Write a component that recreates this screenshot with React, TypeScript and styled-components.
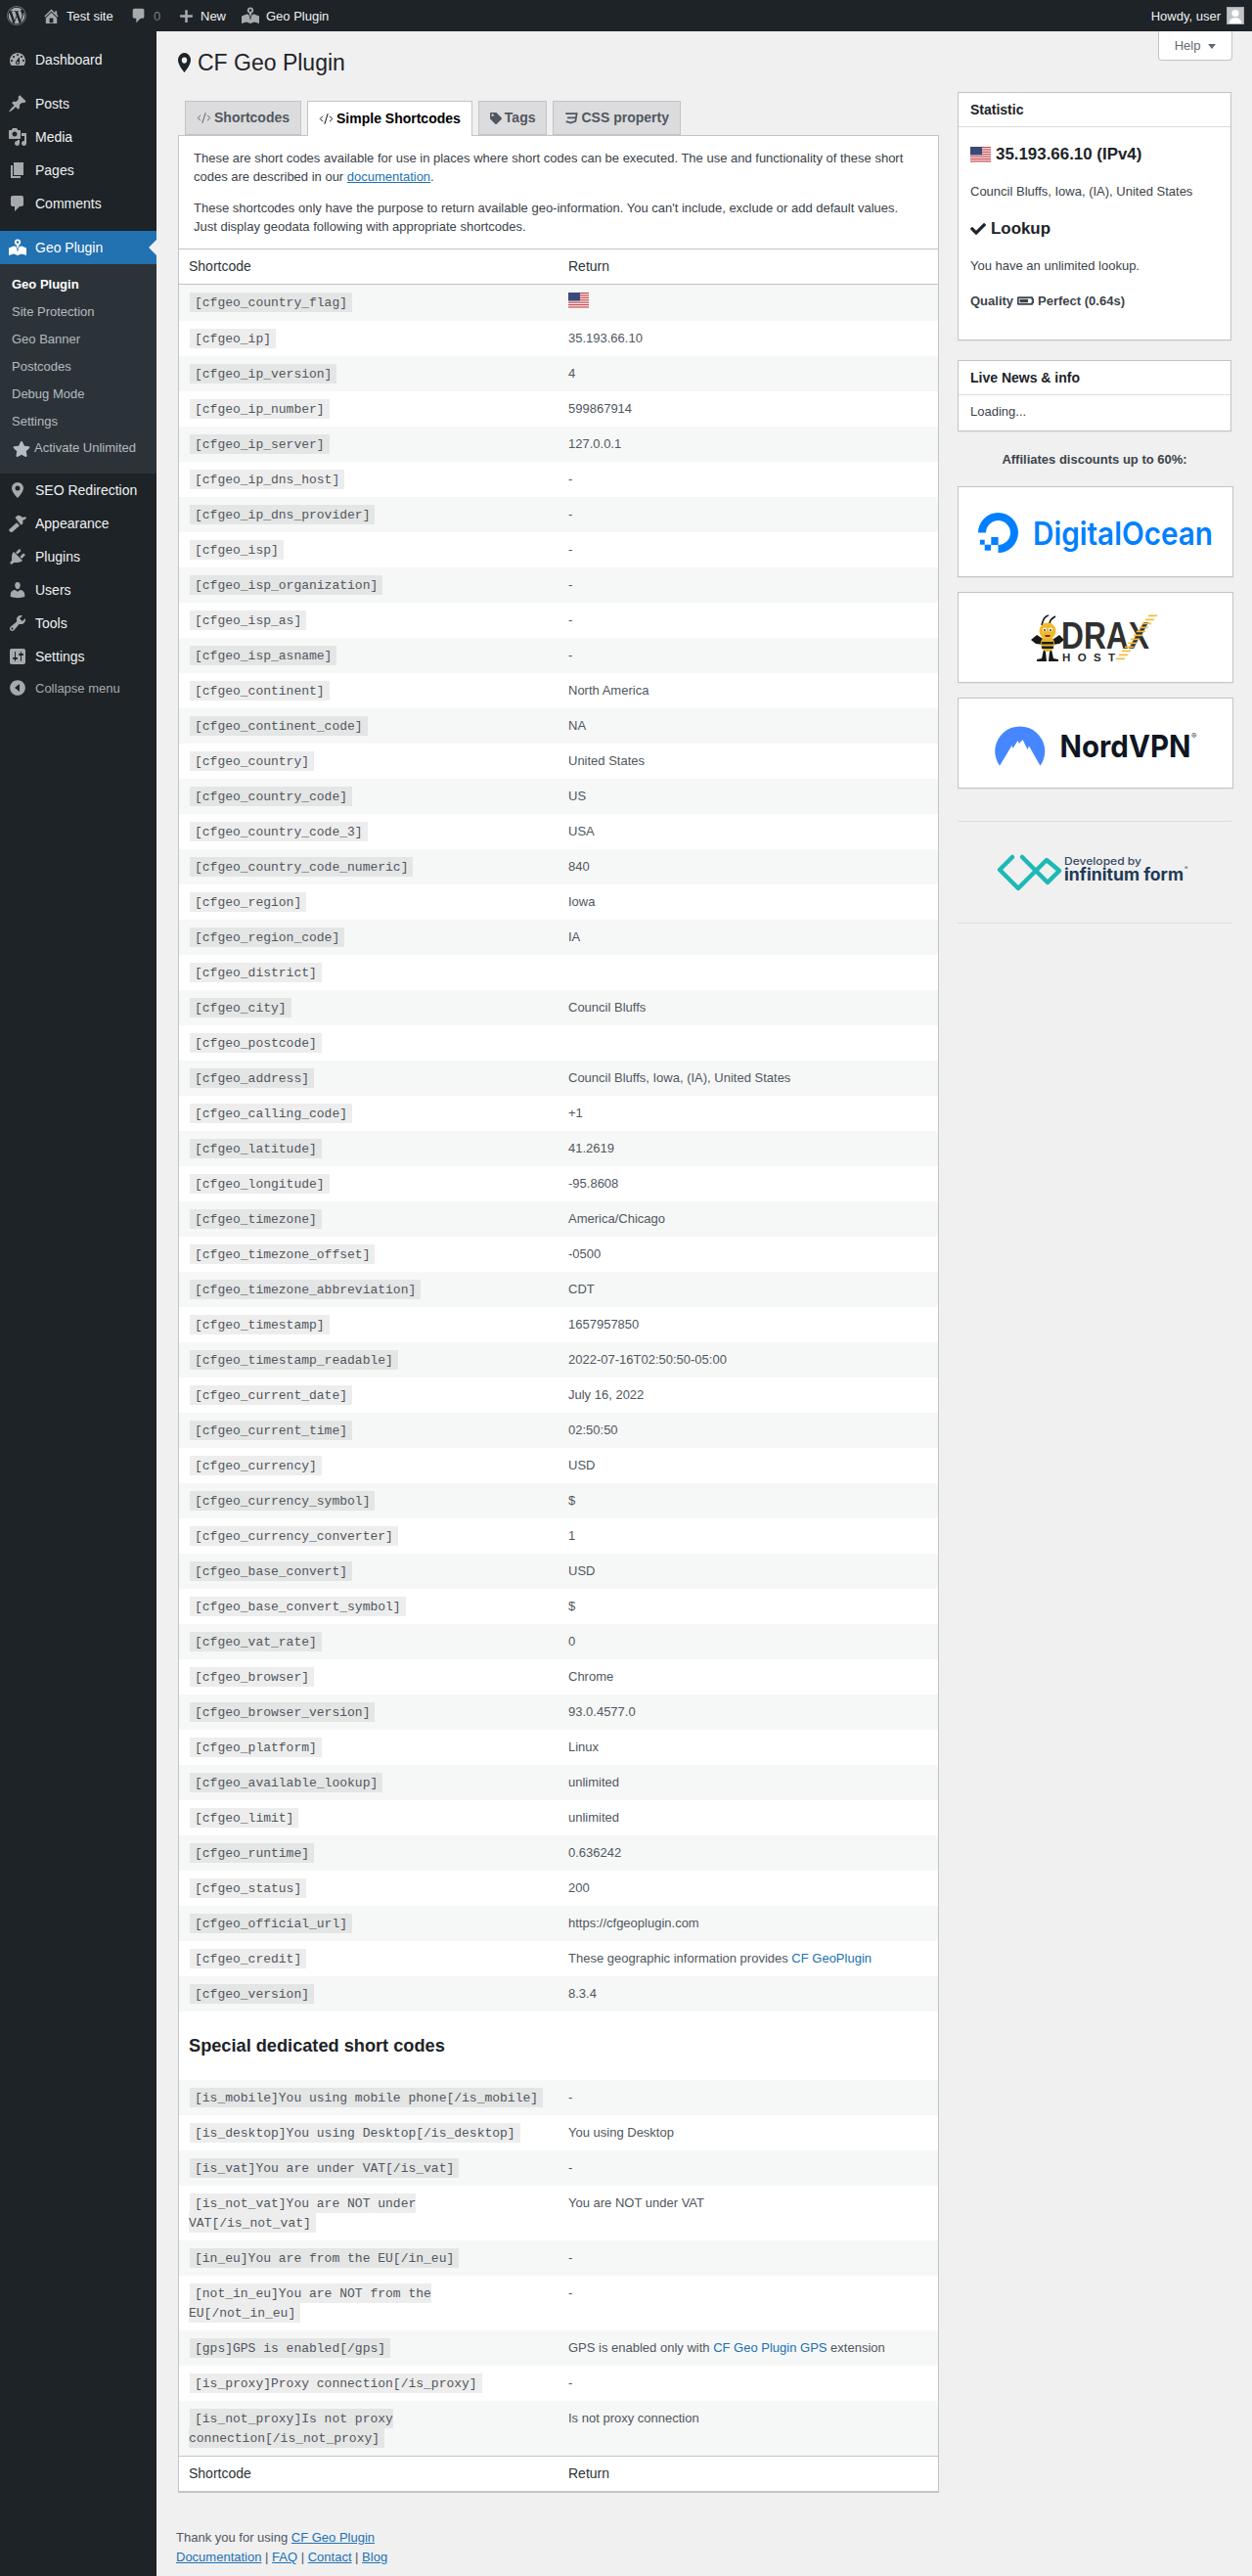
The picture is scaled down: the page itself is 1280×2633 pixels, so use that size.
import React from "react";
import styled, { createGlobalStyle } from "styled-components";
import { FaWordpress, FaTag, FaCheck, FaBatteryThreeQuarters, FaStar } from "react-icons/fa";
import { CodeXml } from "lucide-react";

const GlobalStyle = createGlobalStyle`
  html, body {
    margin: 0;
    padding: 0;
    background: #f0f0f1;
  }
  body {
    font-family: "Liberation Sans", Arial, sans-serif;
    font-size: 13px;
    line-height: 19px;
    color: #3c434a;
  }
  * {
    box-sizing: border-box;
  }
`;

const DASHICONS: Record<string, string> = {
  dashboard:
    "M3.76 16h12.48c1.1-1.37 1.76-3.11 1.76-5 0-4.42-3.58-8-8-8s-8 3.58-8 8c0 1.89.66 3.63 1.76 5zM10 4c.55 0 1 .45 1 1s-.45 1-1 1-1-.45-1-1 .45-1 1-1zM6 6c.55 0 1 .45 1 1s-.45 1-1 1-1-.45-1-1 .45-1 1-1zm8 0c.55 0 1 .45 1 1s-.45 1-1 1-1-.45-1-1 .45-1 1-1zm-5.37 5.55L12 7v6c0 1.1-.9 2-2 2s-2-.9-2-2c0-.57.24-1.08.63-1.45zM4 10c.55 0 1 .45 1 1s-.45 1-1 1-1-.45-1-1 .45-1 1-1zm12 0c.55 0 1 .45 1 1s-.45 1-1 1-1-.45-1-1 .45-1 1-1zm-5 3c0-.55-.45-1-1-1s-1 .45-1 1 .45 1 1 1 1-.45 1-1z",
  post:
    "M10.44 3.02l1.82-1.82 6.36 6.35-1.83 1.82c-1.05-.68-2.48-.57-3.41.36l-.75.75c-.92.93-1.04 2.35-.35 3.41l-1.83 1.82-2.41-2.41-2.8 2.79c-.42.42-3.38 2.71-3.8 2.29s1.86-3.39 2.28-3.81l2.79-2.79L4.1 9.36l1.83-1.82c1.05.69 2.48.57 3.4-.36l.75-.75c.93-.92 1.05-2.35.36-3.41z",
  media:
    "M13 11V4c0-.55-.45-1-1-1h-1.67L9 1H5L3.67 3H2c-.55 0-1 .45-1 1v7c0 .55.45 1 1 1h10c.55 0 1-.45 1-1zM7 4.5c1.38 0 2.5 1.12 2.5 2.5S8.38 9.5 7 9.5 4.5 8.38 4.5 7 5.62 4.5 7 4.5zM14 6h5v10.5c0 1.38-1.12 2.5-2.5 2.5S14 17.88 14 16.5s1.12-2.5 2.5-2.5c.17 0 .34.02.5.05V9h-3V6zm-4 8.05V13h2v3.5c0 1.38-1.12 2.5-2.5 2.5S7 17.88 7 16.5 8.12 14 9.5 14c.17 0 .34.02.5.05z",
  page: "M6 15V2h10v13H6zm-1 1h8v2H3V5h2v11z",
  comments:
    "M5 2h9c1.1 0 2 .9 2 2v7c0 1.1-.9 2-2 2h-2l-5 5v-5H5c-1.1 0-2-.9-2-2V4c0-1.1.9-2 2-2z",
  location:
    "M10 2a6 6 0 0 0-6 6c0 4 6 10 6 10s6-6 6-10a6 6 0 0 0-6-6zm0 8.5A2.5 2.5 0 1 1 10 5.5a2.5 2.5 0 0 1 0 5z",
  appearance:
    "M1.5 16 9 9.2l3 3L5 18.6c-1.6 1.2-4.6-.8-3.5-2.6zM7.5 4l2-1.8c1.5-1 3.5.3 5 1.3 1.5.6 3.5-.5 4.5.5 0 1.5-2.5 2-3.5 3-.5 1 0 2 0 3l-2 1.8z",
  plugins:
    "M13.11 4.36L9.87 7.6 8 5.73l3.24-3.24c.35-.34 1.05-.2 1.56.32.52.51.66 1.21.31 1.55zm-8 1.77l.91-1.12 9.01 9.01-1.19.84c-.71.71-2.63 1.16-3.82 1.16H6.14L4.9 17.26c-.59.59-1.54.59-2.12 0-.59-.58-.59-1.53 0-2.12l1.24-1.24v-3.88c0-1.13.4-3.19 1.09-3.89zm7.26 3.97l3.24-3.24c.34-.35 1.04-.21 1.55.31.52.51.66 1.21.31 1.55l-3.24 3.25z",
  users:
    "M10 9.25c-2.27 0-2.73-3.44-2.73-3.44C7 4.02 7.82 2 9.97 2c2.16 0 2.98 2.02 2.71 3.81 0 0-.41 3.44-2.68 3.44zm0 2.57L12.72 10c2.39 0 4.52 2.33 4.52 4.53v2.49s-3.65 1.13-7.24 1.13c-3.65 0-7.24-1.13-7.24-1.13v-2.49c0-2.25 1.94-4.48 4.47-4.48z",
  tools:
    "M16.68 9.77c-1.34 1.34-3.3 1.67-4.95.99l-5.41 6.52c-.99.99-2.59.99-3.58 0s-.99-2.59 0-3.57l6.52-5.42c-.68-1.65-.35-3.61.99-4.95 1.28-1.28 3.12-1.62 4.72-1.06l-2.89 2.89 2.82 2.82 2.86-2.87c.53 1.58.18 3.39-1.08 4.65zM3.81 16.21c.4.39 1.04.39 1.43 0 .4-.4.4-1.04 0-1.43-.39-.4-1.03-.4-1.43 0-.39.39-.39 1.03 0 1.43z",
  settings:
    "M18 16V4c0-1.1-.9-2-2-2H4c-1.1 0-2 .9-2 2v12c0 1.1.9 2 2 2h12c1.1 0 2-.9 2-2zM8 11h1c.55 0 1 .45 1 1s-.45 1-1 1H8v1.5c0 .28-.22.5-.5.5s-.5-.22-.5-.5V13H6c-.55 0-1-.45-1-1s.45-1 1-1h1V5.5c0-.28.22-.5.5-.5s.5.22.5.5V11zm5-2h-1c-.55 0-1-.45-1-1s.45-1 1-1h1V5.5c0-.28.22-.5.5-.5s.5.22.5.5V7h1c.55 0 1 .45 1 1s-.45 1-1 1h-1v5.5c0 .28-.22.5-.5.5s-.5-.22-.5-.5V9z",
  collapse:
    "M10 2.16c4.33 0 7.84 3.51 7.84 7.84s-3.51 7.84-7.84 7.84S2.16 14.33 2.16 10 5.67 2.16 10 2.16zM12 14V6l-5 4z",
  home:
    "M16 8.5l1.53 1.53-1.06 1.06L10 4.62l-6.47 6.47-1.06-1.06L10 2.5l4 4v-2h2v4zm-6-2.46l6 5.99V18H4v-5.97zM12 17v-5H8v5h4z",
  plus: "M17.5 8.5v3h-6v6h-3v-6h-6v-3h6v-6h3v6z",
  geo:
    "M1 10.5 6 8.5l2.2.2L10 14.5l1.8-5.8 2.2-.2 5 2V18l-5-1.6L10 18l-4-1.6L1 18zM10 1.5a3.1 3.1 0 0 1 1.2 6L10 12.5 8.8 7.5a3.1 3.1 0 0 1 1.2-6zm0 1.8a1.3 1.3 0 1 0 0 2.6 1.3 1.3 0 0 0 0-2.6z",
};

type MenuEntry = { label: string; icon: string; gapBefore?: boolean; current?: boolean };

const MENU_TOP: MenuEntry[] = [
  { label: "Dashboard", icon: "dashboard" },
  { label: "Posts", icon: "post", gapBefore: true },
  { label: "Media", icon: "media" },
  { label: "Pages", icon: "page" },
  { label: "Comments", icon: "comments" },
  { label: "Geo Plugin", icon: "geo", gapBefore: true, current: true },
];

const MENU_SUB = ["Site Protection", "Geo Banner", "Postcodes", "Debug Mode", "Settings"];

const MENU_BOTTOM: MenuEntry[] = [
  { label: "SEO Redirection", icon: "location" },
  { label: "Appearance", icon: "appearance" },
  { label: "Plugins", icon: "plugins" },
  { label: "Users", icon: "users" },
  { label: "Tools", icon: "tools" },
  { label: "Settings", icon: "settings" },
];

const GEO_ROWS: [string, React.ReactNode][] = [
  ["[cfgeo_ip]", "35.193.66.10"],
  ["[cfgeo_ip_version]", "4"],
  ["[cfgeo_ip_number]", "599867914"],
  ["[cfgeo_ip_server]", "127.0.0.1"],
  ["[cfgeo_ip_dns_host]", "-"],
  ["[cfgeo_ip_dns_provider]", "-"],
  ["[cfgeo_isp]", "-"],
  ["[cfgeo_isp_organization]", "-"],
  ["[cfgeo_isp_as]", "-"],
  ["[cfgeo_isp_asname]", "-"],
  ["[cfgeo_continent]", "North America"],
  ["[cfgeo_continent_code]", "NA"],
  ["[cfgeo_country]", "United States"],
  ["[cfgeo_country_code]", "US"],
  ["[cfgeo_country_code_3]", "USA"],
  ["[cfgeo_country_code_numeric]", "840"],
  ["[cfgeo_region]", "Iowa"],
  ["[cfgeo_region_code]", "IA"],
  ["[cfgeo_district]", ""],
  ["[cfgeo_city]", "Council Bluffs"],
  ["[cfgeo_postcode]", ""],
  ["[cfgeo_address]", "Council Bluffs, Iowa, (IA), United States"],
  ["[cfgeo_calling_code]", "+1"],
  ["[cfgeo_latitude]", "41.2619"],
  ["[cfgeo_longitude]", "-95.8608"],
  ["[cfgeo_timezone]", "America/Chicago"],
  ["[cfgeo_timezone_offset]", "-0500"],
  ["[cfgeo_timezone_abbreviation]", "CDT"],
  ["[cfgeo_timestamp]", "1657957850"],
  ["[cfgeo_timestamp_readable]", "2022-07-16T02:50:50-05:00"],
  ["[cfgeo_current_date]", "July 16, 2022"],
  ["[cfgeo_current_time]", "02:50:50"],
  ["[cfgeo_currency]", "USD"],
  ["[cfgeo_currency_symbol]", "$"],
  ["[cfgeo_currency_converter]", "1"],
  ["[cfgeo_base_convert]", "USD"],
  ["[cfgeo_base_convert_symbol]", "$"],
  ["[cfgeo_vat_rate]", "0"],
  ["[cfgeo_browser]", "Chrome"],
  ["[cfgeo_browser_version]", "93.0.4577.0"],
  ["[cfgeo_platform]", "Linux"],
  ["[cfgeo_available_lookup]", "unlimited"],
  ["[cfgeo_limit]", "unlimited"],
  ["[cfgeo_runtime]", "0.636242"],
  ["[cfgeo_status]", "200"],
  ["[cfgeo_official_url]", "https://cfgeoplugin.com"],
  ["[cfgeo_credit]", <CreditValue />],
  ["[cfgeo_version]", "8.3.4"],
];

const SPECIAL_ROWS: [string, React.ReactNode][] = [
  ["[is_mobile]You using mobile phone[/is_mobile]", "-"],
  ["[is_desktop]You using Desktop[/is_desktop]", "You using Desktop"],
  ["[is_vat]You are under VAT[/is_vat]", "-"],
  ["[is_not_vat]You are NOT under VAT[/is_not_vat]", "You are NOT under VAT"],
  ["[in_eu]You are from the EU[/in_eu]", "-"],
  ["[not_in_eu]You are NOT from the EU[/not_in_eu]", "-"],
  ["[gps]GPS is enabled[/gps]", <GpsValue />],
  ["[is_proxy]Proxy connection[/is_proxy]", "-"],
  ["[is_not_proxy]Is not proxy connection[/is_not_proxy]", "Is not proxy connection"],
];

function CreditValue() {
  return (
    <>
      These geographic information provides <PlainLink href="#">CF GeoPlugin</PlainLink>
    </>
  );
}

function GpsValue() {
  return (
    <>
      GPS is enabled only with <PlainLink href="#">CF Geo Plugin GPS</PlainLink> extension
    </>
  );
}

function Dashicon({ name, size = 20 }: { name: string; size?: number }) {
  return (
    <svg width={size} height={size} viewBox="0 0 20 20" fill="currentColor" fillRule="evenodd">
      <path d={DASHICONS[name]} />
    </svg>
  );
}

function UsFlag() {
  const stripes = [0, 1, 2, 3, 4, 5, 6];
  return (
    <svg width="21" height="16" viewBox="0 0 21 16">
      <rect width="21" height="16" fill="#f3e6e6" />
      {stripes.map((i) => (
        <rect key={i} y={i * 2.4} width="21" height="1.1" fill="#c8474f" />
      ))}
      <rect width="12" height="8.4" fill="#3b4a78" />
    </svg>
  );
}

function Css3Icon() {
  return (
    <svg width="14" height="13" viewBox="0 0 16 14" fill="none" stroke="currentColor" strokeWidth="2">
      <path d="M1.5 2H14.5L13 10.8 7.5 12.8 2 11.2M3.5 6.8H13" />
    </svg>
  );
}

function DigitalOceanLogo() {
  return (
    <svg width="280" height="91" viewBox="0 0 280 91">
      <g fill="#0080ff">
        <path d="M40.5 67A20.5 20.5 0 1 0 20 46.5h8A12.5 12.5 0 1 1 40.5 59z" />
        <rect x="33.3" y="51" width="7.3" height="8" />
        <rect x="26.7" y="58.7" width="6.3" height="6" />
        <rect x="22" y="53.7" width="4.7" height="5" />
      </g>
      <text x="76" y="59" fontFamily="Inter, sans-serif" fontWeight="600" fontSize="32" fill="#0080ff" textLength="184" lengthAdjust="spacingAndGlyphs">
        DigitalOcean
      </text>
    </svg>
  );
}

function DraxLogo() {
  const rungs = [0, 1, 2, 3, 4, 5, 6, 7, 8, 9, 10, 11];
  return (
    <svg width="280" height="91" viewBox="0 0 280 91">
      <g fill="#171717">
        <path d="M85 33 C87 26 88 24 92 23 M93 33 C93 27 96 26 99 24" fill="none" stroke="#171717" strokeWidth="1.6" />
        <path d="M88 48 L80 43 L74 48 L79 52 L87 53z" />
        <path d="M96 48 L103 43 L108 48 L103 52 L96 53z" />
        <path d="M87 58 L85 67 L80 68 L80 70 L90 70 L89 60z" />
        <path d="M95 58 L97 67 L102 68 L102 70 L92 70 L93 60z" />
      </g>
      <ellipse cx="91" cy="52" rx="7" ry="8" fill="#e4b32c" />
      <rect x="85" y="50" width="12" height="2.5" fill="#1c1c1c" />
      <rect x="85" y="54.5" width="12" height="2.5" fill="#1c1c1c" />
      <ellipse cx="91" cy="39" rx="8.5" ry="8.5" fill="#f0bb2b" />
      <circle cx="88" cy="37.5" r="2" fill="#fff" />
      <circle cx="94" cy="37.5" r="2" fill="#fff" />
      <circle cx="88" cy="38" r=".9" fill="#222" />
      <circle cx="94" cy="38" r=".9" fill="#222" />
      <path d="M88 43h6l-1 2h-4z" fill="#7a2b16" />
      <text x="105" y="57" fontFamily="Liberation Sans, sans-serif" fontWeight="700" fontSize="39" fill="#303030" textLength="90" lengthAdjust="spacingAndGlyphs">
        DRAX
      </text>
      <text x="106" y="69.5" fontFamily="Liberation Sans, sans-serif" fontWeight="700" fontSize="11.5" fill="#2c2c2c" textLength="54">
        HOST
      </text>
      <g fill="#f5bc3a">
        {rungs.map((i) => (
          <path key={i} d={`M${194.5 - i * 3} ${22.5 + i * 4}h9l-1 1.8h-9z`} />
        ))}
      </g>
    </svg>
  );
}

function NordLogo() {
  return (
    <svg width="280" height="91" viewBox="0 0 280 91">
      <path
        d="M42 68.7A25.5 25.5 0 1 1 83.5 68.7L72 48.5 70.5 52 65.5 42 62 46 60.5 43 55.5 51 54.5 48z"
        fill="#4687ff"
      />
      <text x="103.5" y="60" fontFamily="Inter, sans-serif" fontWeight="700" fontSize="31.5" fill="#0f1622" textLength="134" lengthAdjust="spacingAndGlyphs">
        NordVPN
      </text>
      <text x="238" y="41" fontFamily="Inter, sans-serif" fontSize="8" fill="#3a404a">
        ®
      </text>
    </svg>
  );
}

function InfinitumLogo() {
  return (
    <svg width="280" height="102" viewBox="0 0 280 102">
      <path
        d="M56 36 43 49 62 68 91 39 104 50 92 62 66 36"
        fill="none"
        stroke="#1cb9b5"
        strokeWidth="4.5"
        strokeLinejoin="round"
        strokeLinecap="round"
      />
      <text x="109" y="44" fontFamily="Inter, sans-serif" fontWeight="500" fontSize="11" fill="#34495e" textLength="79" lengthAdjust="spacingAndGlyphs">
        Developed by
      </text>
      <text x="109" y="60" fontFamily="Inter, sans-serif" fontWeight="700" fontSize="17" fill="#1f3a55" textLength="122" lengthAdjust="spacingAndGlyphs">
        infinitum form
      </text>
      <text x="232" y="49" fontFamily="Inter, sans-serif" fontSize="5" fill="#1f3a55">
        ®
      </text>
    </svg>
  );
}

function SideLink({ entry }: { entry: MenuEntry }) {
  return (
    <SideItem $gapBefore={entry.gapBefore} $current={entry.current}>
      <SideIcon $current={entry.current}>
        <Dashicon name={entry.icon} />
      </SideIcon>
      {entry.label}
    </SideItem>
  );
}

function App() {
  return (
    <Page>
      <GlobalStyle />
      <AdminBar>
        <BarGroup>
          <BarItem $icon $inset={7} $width={38}>
            <FaWordpress size={20} />
          </BarItem>
          <BarItem $width={88} $inset={5}>
            <BarIcon>
              <Dashicon name="home" size={19} />
            </BarIcon>
            Test site
          </BarItem>
          <BarItem $width={46} $inset={7}>
            <BarIcon>
              <Dashicon name="comments" size={18} />
            </BarIcon>
            <BarCount>0</BarCount>
          </BarItem>
          <BarItem $width={66} $inset={10}>
            <BarIcon>
              <Dashicon name="plus" size={17} />
            </BarIcon>
            New
          </BarItem>
          <BarItem $inset={8}>
            <BarIcon>
              <Dashicon name="geo" size={20} />
            </BarIcon>
            Geo Plugin
          </BarItem>
        </BarGroup>
        <BarGroup>
          <Howdy>Howdy, user</Howdy>
          <Avatar>
            <svg width="16" height="16" viewBox="0 0 16 16" fill="#fff">
              <circle cx="8" cy="5.5" r="3.6" />
              <path d="M1.5 16c.3-4 3-5.8 6.5-5.8s6.2 1.8 6.5 5.8z" />
            </svg>
          </Avatar>
        </BarGroup>
      </AdminBar>

      <Body>
        <Sidebar>
          {MENU_TOP.map((entry) => (
            <SideLink key={entry.label} entry={entry} />
          ))}
          <SubMenu>
            <SubItem $active>Geo Plugin</SubItem>
            {MENU_SUB.map((label) => (
              <SubItem key={label}>{label}</SubItem>
            ))}
            <ActivateItem>
              <FaStar size={18} />
              <span>Activate Unlimited</span>
            </ActivateItem>
          </SubMenu>
          {MENU_BOTTOM.map((entry) => (
            <SideLink key={entry.label} entry={entry} />
          ))}
          <CollapseItem>
            <Dashicon name="collapse" />
            Collapse menu
          </CollapseItem>
        </Sidebar>

        <Content>
          <HelpTab>
            Help
            <HelpArrow />
          </HelpTab>

          <Title>
            <TitlePin viewBox="4 2 12 16" preserveAspectRatio="none" fill="currentColor" fillRule="evenodd">
              <path d={DASHICONS.location} />
            </TitlePin>
            CF Geo Plugin
          </Title>

          <Columns>
            <MainColumn>
              <Tabs>
                <Tab>
                  <CodeXml size={15} strokeWidth={1.5} />
                  Shortcodes
                </Tab>
                <Tab $active>
                  <CodeXml size={15} strokeWidth={1.5} />
                  Simple Shortcodes
                </Tab>
                <Tab>
                  <FaTag size={12} />
                  Tags
                </Tab>
                <Tab>
                  <Css3Icon />
                  CSS property
                </Tab>
              </Tabs>

              <Panel>
                <Intro>
                  <p>
                    These are short codes available for use in places where short codes can be executed. The use and
                    functionality of these short codes are described in our <a href="#">documentation</a>.
                  </p>
                  <p>
                    These shortcodes only have the purpose to return available geo-information. You can't include,
                    exclude or add default values. Just display geodata following with appropriate shortcodes.
                  </p>
                </Intro>

                <CodeTable>
                  <thead>
                    <tr>
                      <HeadCell>Shortcode</HeadCell>
                      <HeadCell>Return</HeadCell>
                    </tr>
                  </thead>
                  <tbody>
                    <FlagRow>
                      <td>
                        <Code>[cfgeo_country_flag]</Code>
                      </td>
                      <td>
                        <FlagWrap>
                          <UsFlag />
                        </FlagWrap>
                      </td>
                    </FlagRow>
                    {GEO_ROWS.map(([code, value]) => (
                      <tr key={code}>
                        <td>
                          <Code>{code}</Code>
                        </td>
                        <td>{value}</td>
                      </tr>
                    ))}
                    <tr>
                      <SectionCell colSpan={2}>Special dedicated short codes</SectionCell>
                    </tr>
                    {SPECIAL_ROWS.map(([code, value]) => (
                      <tr key={code}>
                        <td>
                          <Code>{code}</Code>
                        </td>
                        <td>{value}</td>
                      </tr>
                    ))}
                  </tbody>
                  <tfoot>
                    <tr>
                      <FootCell>Shortcode</FootCell>
                      <FootCell>Return</FootCell>
                    </tr>
                  </tfoot>
                </CodeTable>
              </Panel>

              <Thanks>
                <div>
                  Thank you for using <a href="#">CF Geo Plugin</a>
                </div>
                <div>
                  <a href="#">Documentation</a> | <a href="#">FAQ</a> | <a href="#">Contact</a> | <a href="#">Blog</a>
                </div>
              </Thanks>
            </MainColumn>

            <SideColumn>
              <Box>
                <BoxTitle>Statistic</BoxTitle>
                <StatBody>
                  <StatHeading>
                    <UsFlag />
                    35.193.66.10 (IPv4)
                  </StatHeading>
                  <StatText $bottom={18}>Council Bluffs, Iowa, (IA), United States</StatText>
                  <StatHeading>
                    <FaCheck size={16} />
                    Lookup
                  </StatHeading>
                  <StatText $bottom={17}>You have an unlimited lookup.</StatText>
                  <Quality>
                    Quality <FaBatteryThreeQuarters size={17} /> Perfect (0.64s)
                  </Quality>
                </StatBody>
              </Box>

              <Box>
                <BoxTitle>Live News &amp; info</BoxTitle>
                <NewsBody>Loading...</NewsBody>
              </Box>

              <Affiliates>Affiliates discounts up to 60%:</Affiliates>

              <Banners>
                <Banner>
                  <DigitalOceanLogo />
                </Banner>
                <Banner>
                  <DraxLogo />
                </Banner>
                <Banner>
                  <NordLogo />
                </Banner>
              </Banners>

              <DevBlock>
                <InfinitumLogo />
              </DevBlock>
            </SideColumn>
          </Columns>
        </Content>
      </Body>
    </Page>
  );
}

export default App;

const Page = styled.div`
  min-height: 2633px;
  display: flex;
  flex-direction: column;
`;

const AdminBar = styled.header`
  height: 32px;
  background: #1d2327;
  color: #f0f0f1;
  display: flex;
  align-items: center;
  justify-content: space-between;
  padding-right: 8px;
  flex-shrink: 0;
`;

const BarGroup = styled.div`
  display: flex;
  align-items: center;
`;

const BarItem = styled.div<{ $icon?: boolean; $inset?: number; $width?: number }>`
  display: flex;
  align-items: center;
  height: 32px;
  gap: 6px;
  padding-left: ${({ $inset }) => $inset ?? 7}px;
  width: ${({ $width }) => ($width ? `${$width}px` : "auto")};
  color: ${({ $icon }) => ($icon ? "#a7aaad" : "#f0f0f1")};
  white-space: nowrap;
`;

const BarIcon = styled.span`
  display: flex;
  color: #a7aaad;
`;

const BarCount = styled.span`
  color: #787c82;
`;

const Howdy = styled.span`
  margin-right: 6px;
`;

const Avatar = styled.span`
  width: 18px;
  height: 18px;
  background: #c3c4c7;
  border: 1px solid #a7aaad;
  overflow: hidden;
  display: block;
`;

const Body = styled.div`
  flex: 1;
  display: flex;
`;

const Sidebar = styled.aside`
  width: 160px;
  flex-shrink: 0;
  background: #1d2327;
  padding-top: 12px;
`;

const SideItem = styled.div<{ $gapBefore?: boolean; $current?: boolean }>`
  position: relative;
  height: 34px;
  margin-top: ${({ $gapBefore }) => ($gapBefore ? "11px" : "0")};
  padding-left: 36px;
  display: flex;
  align-items: center;
  font-size: 14px;
  color: ${({ $current }) => ($current ? "#fff" : "#f0f0f1")};
  background: ${({ $current }) => ($current ? "#2271b1" : "transparent")};

  ${({ $current }) =>
    $current &&
    `
    &::after {
      content: "";
      position: absolute;
      right: 0;
      top: 9px;
      border: 8px solid transparent;
      border-right-color: #f0f0f1;
    }
  `}
`;

const SideIcon = styled.span<{ $current?: boolean }>`
  position: absolute;
  left: 8px;
  top: 7px;
  display: flex;
  color: ${({ $current }) => ($current ? "#fff" : "#a7aaad")};
`;

const SubMenu = styled.div`
  background: #2c3338;
  padding: 6px 0 11px;
`;

const SubItem = styled.div<{ $active?: boolean }>`
  height: 28px;
  padding-left: 12px;
  display: flex;
  align-items: center;
  color: ${({ $active }) => ($active ? "#fff" : "rgba(240, 246, 252, 0.7)")};
  font-weight: ${({ $active }) => ($active ? 700 : 400)};
`;

const ActivateItem = styled.div`
  height: 29px;
  padding-left: 13px;
  display: flex;
  align-items: flex-start;
  gap: 4px;
  color: rgba(240, 246, 252, 0.7);

  svg {
    margin-top: 6px;
  }

  span {
    line-height: 28px;
  }
`;

const CollapseItem = styled.div`
  height: 34px;
  margin-top: -2px;
  padding-left: 8px;
  display: flex;
  align-items: center;
  gap: 8px;
  color: #a7aaad;
`;

const Content = styled.main`
  position: relative;
  flex: 1;
  padding-left: 20px;
`;

const HelpTab = styled.div`
  position: absolute;
  top: 0;
  right: 20px;
  width: 76px;
  height: 30px;
  background: #fff;
  border: 1px solid #c3c4c7;
  border-top: none;
  border-radius: 0 0 4px 4px;
  color: #646970;
  display: flex;
  align-items: center;
  justify-content: center;
  gap: 8px;
`;

const HelpArrow = styled.span`
  border: 4px solid transparent;
  border-top: 5px solid #646970;
  border-bottom: none;
  margin-top: 1px;
`;

const Title = styled.h1`
  margin: 17px 0 15px;
  padding-left: 2px;
  height: 30px;
  display: flex;
  align-items: center;
  gap: 7px;
  font-size: 23px;
  font-weight: 400;
  line-height: 30px;
  color: #1d2327;
`;

const TitlePin = styled.svg`
  width: 13px;
  height: 20px;
`;

const Columns = styled.div`
  display: grid;
  grid-template-columns: 780px 282px;
  column-gap: 19px;
  align-items: start;
`;

const MainColumn = styled.div`
  padding-top: 9px;
`;

const Tabs = styled.nav`
  display: flex;
  gap: 6px;
  padding-left: 9px;
  position: relative;
  z-index: 1;
`;

const Tab = styled.div<{ $active?: boolean }>`
  height: ${({ $active }) => ($active ? "36px" : "35px")};
  margin-bottom: ${({ $active }) => ($active ? "-1px" : "0")};
  padding: 0 11px;
  display: flex;
  align-items: center;
  gap: 3px;
  font-size: 14px;
  font-weight: 700;
  background: ${({ $active }) => ($active ? "#fff" : "#dcdcde")};
  color: ${({ $active }) => ($active ? "#000" : "#50575e")};
  border: 1px solid #c3c4c7;
  border-bottom: ${({ $active }) => ($active ? "none" : "1px solid #c3c4c7")};
`;

const Panel = styled.section`
  margin-left: 2px;
  width: 778px;
  background: #fff;
  border: 1px solid #c3c4c7;
  border-bottom-width: 2px;
`;

const Intro = styled.div`
  padding: 13px 15px;

  p {
    margin: 0 0 13px;
    line-height: 19px;
  }

  p:last-child {
    margin-bottom: 0;
  }

  a {
    color: #2271b1;
  }
`;

const CodeTable = styled.table`
  width: 100%;
  table-layout: fixed;
  border-collapse: separate;
  border-spacing: 0;
  border-top: 1px solid #c3c4c7;

  tbody tr:nth-child(odd) {
    background: #f6f7f7;
  }

  tbody td {
    padding: 8px 10px;
    line-height: 20px;
    color: #50575e;
    vertical-align: top;
  }
`;

const HeadCell = styled.th`
  padding: 8px 10px;
  line-height: 19px;
  font-size: 14px;
  font-weight: 400;
  text-align: left;
  color: #2c3338;
  border-bottom: 1px solid #c3c4c7;
`;

const FootCell = styled(HeadCell)`
  border-bottom: none;
  border-top: 1px solid #c3c4c7;
`;

const FlagRow = styled.tr`
  td:first-child {
    padding-bottom: 9px;
  }
`;

const FlagWrap = styled.span`
  display: block;
  height: 20px;

  svg {
    display: block;
  }
`;

const Code = styled.code`
  font-family: "Liberation Mono", "Courier New", monospace;
  font-size: 13px;
  line-height: 15px;
  padding: 3px 5px 2px;
  margin: 0 1px;
  background: rgba(0, 0, 0, 0.07);
  color: #50575e;
`;

const PlainLink = styled.a`
  color: #2271b1;
  text-decoration: none;
`;

const SectionCell = styled.td`
  && {
    height: 70px;
    padding: 0 10px;
    vertical-align: middle;
    font-size: 18.2px;
    font-weight: 700;
    color: #1d2327;
  }
`;

const Thanks = styled.footer`
  margin-top: 36px;
  padding-bottom: 10px;
  line-height: 20px;
  color: #50575e;

  a {
    color: #2271b1;
  }
`;

const SideColumn = styled.aside`
  display: flex;
  flex-direction: column;
`;

const Box = styled.div`
  width: 280px;
  background: #fff;
  border: 1px solid #c3c4c7;
  box-shadow: 0 1px 1px rgba(0, 0, 0, 0.04);
  margin-bottom: 20px;
`;

const BoxTitle = styled.h2`
  margin: 0;
  height: 35px;
  padding: 0 12px;
  display: flex;
  align-items: center;
  font-size: 14px;
  color: #1d2327;
  border-bottom: 1px solid #dcdcde;
`;

const StatBody = styled.div`
  padding: 17px 12px 30px;
`;

const StatHeading = styled.h3`
  margin: 0;
  display: flex;
  align-items: center;
  gap: 5px;
  font-size: 16.9px;
  line-height: 22px;
  color: #1d2327;
`;

const StatText = styled.p<{ $bottom: number }>`
  margin: 17px 0 ${({ $bottom }) => $bottom}px;
  line-height: 19px;
`;

const Quality = styled.div`
  display: flex;
  align-items: center;
  gap: 4px;
  font-weight: 700;
`;

const NewsBody = styled.div`
  padding: 7px 12px 10px;
`;

const Affiliates = styled.div`
  width: 280px;
  margin-top: -1px;
  text-align: center;
  font-weight: 700;
  color: #3c434a;
`;

const Banners = styled.div`
  margin-top: 18px;
  display: flex;
  flex-direction: column;
  gap: 15px;
`;

const Banner = styled.div`
  width: 282px;
  height: 93px;
  background: #fff;
  border: 1px solid #c3c4c7;
  box-shadow: 0 1px 1px rgba(0, 0, 0, 0.04);

  svg {
    display: block;
  }
`;

const DevBlock = styled.div`
  width: 280px;
  margin-top: 33px;
  height: 105px;
  border-top: 1px solid #dcdcde;
  border-bottom: 1px solid #dcdcde;

  svg {
    display: block;
  }
`;
